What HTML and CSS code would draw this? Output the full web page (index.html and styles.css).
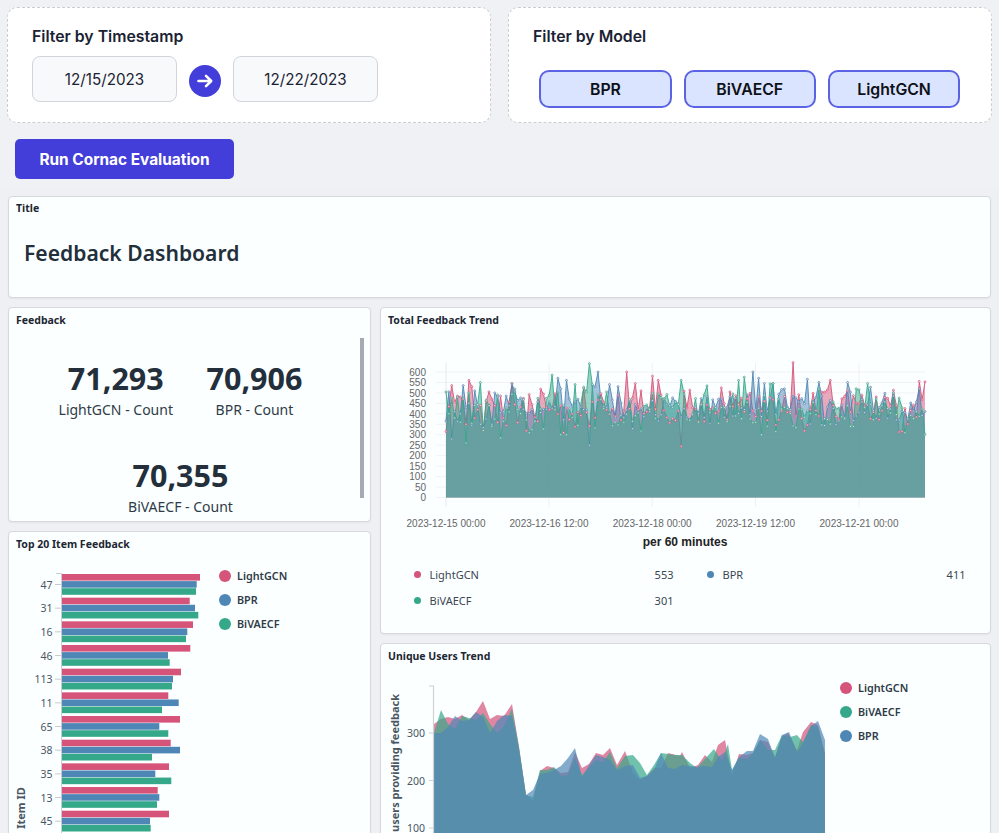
FILE: index.html
```html
<!DOCTYPE html>
<html lang="en">
<head>
<meta charset="utf-8">
<title>Feedback Dashboard</title>
<link rel="stylesheet" href="styles.css">
</head>
<body>
<section class="filters">
  <div class="filter-card">
    <div class="filter-label">Filter by Timestamp</div>
    <div class="date-row">
      <div class="date-box">12/15/2023</div>
      <div class="arrow-circle">
        <svg width="18" height="18" viewBox="0 0 18 18" fill="none" stroke="#fff" stroke-width="2.6" stroke-linecap="round" stroke-linejoin="round"><path d="M2.5 9h12.5M10 3.8 15.2 9 10 14.2"/></svg>
      </div>
      <div class="date-box">12/22/2023</div>
    </div>
  </div>
  <div class="filter-card">
    <div class="filter-label">Filter by Model</div>
    <div class="model-row">
      <div class="model-btn">BPR</div>
      <div class="model-btn">BiVAECF</div>
      <div class="model-btn">LightGCN</div>
    </div>
  </div>
</section>
<div class="run-row"><div class="run-btn">Run Cornac Evaluation</div></div>
<main class="dash">
  <section class="card title-card">
    <h2 class="card-title">Title</h2>
    <h1 class="dash-title">Feedback Dashboard</h1>
  </section>
  <div class="columns">
    <div class="col col-left">
      <section class="card feedback-card">
        <h2 class="card-title">Feedback</h2>
        <div class="stats">
          <div class="stat"><div class="stat-num">71,293</div><div class="stat-label">LightGCN - Count</div></div>
          <div class="stat"><div class="stat-num">70,906</div><div class="stat-label">BPR - Count</div></div>
          <div class="stat"><div class="stat-num">70,355</div><div class="stat-label">BiVAECF - Count</div></div>
        </div>
        <div class="scroll-thumb"></div>
      </section>
      <section class="card top-card">
        <h2 class="card-title">Top 20 Item Feedback</h2>
        <svg id="top-chart" class="chart" width="361" height="300" viewBox="9 557 361 300"></svg>
      </section>
    </div>
    <div class="col col-right">
      <section class="card trend-card">
        <h2 class="card-title">Total Feedback Trend</h2>
        <svg id="trend-chart" class="chart" width="609" height="222" viewBox="381 333 609 222"></svg>
        <div class="trend-legend">
          <div class="leg-item"><i class="dot pink"></i><span class="leg-name">LightGCN</span><span class="leg-val">553</span></div>
          <div class="leg-item"><i class="dot blue"></i><span class="leg-name">BPR</span><span class="leg-val">411</span></div>
          <div class="leg-item"><i class="dot green"></i><span class="leg-name">BiVAECF</span><span class="leg-val">301</span></div>
        </div>
      </section>
      <section class="card users-card">
        <h2 class="card-title">Unique Users Trend</h2>
        <svg id="users-chart" class="chart" width="609" height="200" viewBox="381 669 609 200"></svg>
      </section>
    </div>
  </div>
</main>
<script src="charts.js"></script>
</body>
</html>
```
FILE: styles.css
```css
html, body { margin: 0; height: 833px; overflow: hidden; }
body { background: #f0f1f4; font-family: "Noto Sans", sans-serif; color: #232f3b; }
* { box-sizing: border-box; }

.filters { display: grid; grid-template-columns: 484px 484px; gap: 17px; padding: 7px 7px 0 7px; }
.filter-card { height: 116px; background: #fff; border: 1px dashed #c9ccd1; border-radius: 10px; padding: 18px 24px; font-family: Inter, sans-serif; }
.filter-label { font-size: 15.8px; font-weight: 600; line-height: 22px; color: #1a2233; }
.date-row { display: flex; align-items: center; gap: 12px; margin-top: 8px; }
.date-box { width: 145px; height: 46px; display: flex; align-items: center; justify-content: center; background: #f8f9fb; border: 1px solid #d1d5db; border-radius: 8px; font-size: 15.2px; color: #1a2233; }
.arrow-circle { width: 32px; height: 32px; margin-top: 4px; border-radius: 50%; background: #433dd9; display: flex; align-items: center; justify-content: center; }
.model-row { display: flex; gap: 12px; margin: 22px 0 0 6.3px; }
.model-btn { width: 132.3px; height: 38px; display: flex; align-items: center; justify-content: center; background: #dbe4fe; border: 2px solid #5b63e4; border-radius: 10px; font-size: 15.8px; font-weight: 600; color: #0d1117; }

.run-row { padding: 16px 15px 7px; height: 64px; }
.run-btn { width: 219px; height: 40px; display: flex; align-items: center; justify-content: center; background: #433dd9; border-radius: 5px; color: #fff; font-family: Inter, sans-serif; font-size: 15.4px; font-weight: 700; }

.dash { background: #eef0f3; padding: 9px 8px 0; display: flex; flex-direction: column; gap: 9px; }
.columns { display: grid; grid-template-columns: 363px 611px; gap: 9px; }
.col { display: flex; flex-direction: column; gap: 9px; }

.card { position: relative; background: #fbffff; border: 1px solid #d5d8dc; border-radius: 4px; box-shadow: 0 1px 2px rgba(0,0,0,.05); overflow: hidden; }
.card-title { margin: 0; padding: 5px 7px 0; font-size: 10.5px; line-height: 14px; font-weight: 700; color: #1d2733; }
.title-card { height: 102px; }
.title-card .card-title { padding-top: 4px; }
.dash-title { margin: 23px 0 0 15px; font-size: 21.1px; line-height: 30px; font-weight: 600; color: #232f3b; }

.feedback-card { height: 215px; }
.stats { display: flex; flex-wrap: wrap; justify-content: center; padding: 29px 18px 0 0; }
.stat { padding: 0 16.75px; height: 97px; text-align: center; }
.stat-num { font-size: 30.5px; line-height: 44px; font-weight: 700; color: #232f3b; }
.stat-label { font-size: 14px; line-height: 20px; color: #2f3b47; }
.scroll-thumb { position: absolute; left: 351px; top: 30px; width: 4px; height: 160px; background: #a5abb3; }

.top-card { height: 500px; }
.trend-card { height: 327px; }
.users-card { height: 400px; }
.chart { display: block; margin-top: 6px; }
.chart text { font-family: "Noto Sans", sans-serif; }
.chart .ltick { font-family: "Liberation Sans", sans-serif; font-size: 10px; fill: #666; }
.chart .laxis { font-family: "Liberation Sans", sans-serif; font-size: 12px; font-weight: 700; fill: #222; }
.chart .tick { font-size: 10.5px; fill: #4a5663; }
.chart .axis-title { font-size: 11px; font-weight: 700; fill: #4a5663; }
.chart .leg { font-size: 10.8px; font-weight: 600; fill: #2f3b47; }

.trend-legend { display: grid; grid-template-columns: 260px 259px; row-gap: 7px; column-gap: 33px; padding: 9.5px 0 0 32.5px; }
.leg-item { display: flex; align-items: center; font-size: 11px; line-height: 19px; color: #3b4653; }
.dot { width: 7px; height: 7px; border-radius: 50%; margin-right: 9px; }
.leg-name { flex: 1; }
.pink { background: #d6537a; }
.blue { background: #4e87b6; }
.green { background: #36a88a; }
```
FILE: charts.js
```js
(function () {
  var NS = 'http://www.w3.org/2000/svg';
  var PINK = '#d6537a', BLUE = '#4e87b6', GREEN = '#36a88a';

  function el(parent, name, attrs, text) {
    var n = document.createElementNS(NS, name);
    for (var k in attrs) n.setAttribute(k, attrs[k]);
    if (text !== undefined) n.textContent = text;
    parent.appendChild(n);
    return n;
  }
  function legend(svg, x, y, items) {
    items.forEach(function (it, i) {
      el(svg, 'circle', { cx: x, cy: y + i * 24, r: 6, fill: it[1] });
      el(svg, 'text', { x: x + 12, y: y + i * 24 + 4, 'class': 'leg' }, it[0]);
    });
  }

  /* Top 20 items: bar ends in px */
  var top = document.getElementById('top-chart');
  var items = [
    ['47', 200, 196.7, 196], ['31', 189.7, 195, 198.3], ['16', 193, 187.3, 186],
    ['46', 190.3, 168, 169.7], ['113', 181, 173, 172], ['11', 168.3, 178.7, 162],
    ['65', 180, 159.3, 168.3], ['38', 170.7, 180, 152], ['35', 169, 155.3, 171.3],
    ['13', 157.7, 159.3, 157], ['45', 169, 150, 150.7]
  ];
  el(top, 'line', { x1: 61.5, y1: 573, x2: 61.5, y2: 850, stroke: '#c8cbcf', 'stroke-width': 1 });
  el(top, 'line', { x1: 56, y1: 573.5, x2: 62, y2: 573.5, stroke: '#c8cbcf' });
  items.forEach(function (d, i) {
    var y = 574 + i * 23.67;
    [PINK, BLUE, GREEN].forEach(function (c, j) {
      el(top, 'rect', { x: 62, y: y + j * 7.1, width: d[j + 1] - 62, height: 6.6, fill: c });
    });
    el(top, 'line', { x1: 55, y1: y + 10.5, x2: 62, y2: y + 10.5, stroke: '#c8cbcf' });
    el(top, 'text', { x: 52.5, y: y + 14.5, 'text-anchor': 'end', 'class': 'tick' }, d[0]);
  });
  el(top, 'text', { transform: 'translate(25 808) rotate(-90)', 'text-anchor': 'middle', 'class': 'axis-title' }, 'Item ID');
  legend(top, 225, 576, [['LightGCN', PINK], ['BPR', BLUE], ['BiVAECF', GREEN]]);

  /* Total feedback trend */
  var trend = document.getElementById('trend-chart');
  var x0 = 446, xEnd = 925, y0 = 497.5, k = 0.2092, N = 168;
  var seed = 20231215;
  function rnd() {
    seed = (seed + 0x6D2B79F5) | 0;
    var t = Math.imul(seed ^ (seed >>> 15), 1 | seed);
    t = (t + Math.imul(t ^ (t >>> 7), 61 | t)) ^ t;
    return ((t ^ (t >>> 14)) >>> 0) / 4294967296;
  }
  function series(head, over, last) {
    var a = [];
    for (var i = 0; i < N; i++) {
      var v = 430 + (rnd() + rnd() + rnd() - 1.5) * 105;
      a.push(Math.round(Math.max(300, Math.min(545, v))));
    }
    head.forEach(function (v, i) { a[i] = v; });
    for (var key in over) a[key] = over[key];
    a[N - 1] = last;
    return a;
  }
  var pink = series([315, 435, 535, 455, 485, 480, 470, 350, 560, 530, 380, 420, 440, 320, 460, 505, 470, 440, 360, 485, 380],
    { 23: 545, 63: 600, 68: 510, 72: 580, 74: 560, 82: 245, 121: 645, 134: 560, 165: 555 }, 553);
  var blue = series([365, 505, 280, 410, 365, 400, 535, 430, 450, 345, 510, 440, 350, 335, 375, 440, 350, 500, 480, 405, 410],
    { 39: 570, 40: 520, 42: 560, 50: 250, 52: 530, 53: 600, 57: 540, 60: 530, 107: 600, 109: 570, 126: 565, 130: 550, 140: 550 }, 411);
  var green = series([505, 400, 475, 380, 480, 360, 475, 260, 500, 355, 440, 445, 550, 320, 465, 440, 340, 375, 490, 285, 365],
    { 36: 490, 37: 585, 45: 540, 50: 640, 51: 540, 82: 560, 102: 560, 104: 575 }, 301);

  [100, 200, 300, 400, 500, 600, 50, 150, 250, 350, 450, 550, 0].forEach(function (v) {
    var y = y0 - v * k;
    el(trend, 'line', { x1: 436, y1: y, x2: 925, y2: y, stroke: '#f1f2f3', 'stroke-width': 1 });
  });
  [446, 549, 652.2, 755.5, 859].forEach(function (x, i) {
    el(trend, 'line', { x1: x, y1: 363, x2: x, y2: 507, stroke: i ? '#eff0f1' : '#e6e7e9', 'stroke-width': 1 });
    el(trend, 'text', { x: x, y: 527, 'text-anchor': 'middle', 'class': 'ltick' },
      ['2023-12-15 00:00', '2023-12-16 12:00', '2023-12-18 00:00', '2023-12-19 12:00', '2023-12-21 00:00'][i]);
  });
  for (var v = 0; v <= 600; v += 50) {
    el(trend, 'text', { x: 426, y: y0 - v * k + 3.7, 'text-anchor': 'end', 'class': 'ltick' }, v);
  }
  [[pink, PINK], [blue, BLUE], [green, GREEN]].forEach(function (s) {
    var pts = s[0].map(function (v, i) {
      return (x0 + i * (xEnd - x0) / (N - 1)).toFixed(1) + ',' + (y0 - v * k).toFixed(1);
    });
    el(trend, 'polygon', { points: x0 + ',' + y0 + ' ' + pts.join(' ') + ' ' + xEnd + ',' + y0, fill: s[1], 'fill-opacity': 0.5 });
    el(trend, 'polyline', { points: pts.join(' '), fill: 'none', stroke: s[1], 'stroke-width': 0.9 });
  });
  [[pink, PINK], [blue, BLUE], [green, GREEN]].forEach(function (s) {
    s[0].forEach(function (v, i) {
      el(trend, 'circle', { cx: x0 + i * (xEnd - x0) / (N - 1), cy: y0 - v * k, r: 1, fill: '#f7dde5', stroke: s[1], 'stroke-width': 0.7 });
    });
  });
  el(trend, 'text', { x: 685, y: 546, 'text-anchor': 'middle', 'class': 'laxis' }, 'per 60 minutes');

  /* Unique users trend: points read in px */
  var users = document.getElementById('users-chart');
  var P = [[434,724],[441,719],[448,717],[455,719],[462,715],[469,720],[476,712],[483,701],[490,719],[497,715],[504,716],[512,704],[519,747],[526,795],[533,801],[540,771],[547,766],[554,768],[561,773],[568,772],[575,752],[582,768],[589,764],[596,753],[603,755],[610,748],[617,765],[625,751],[633,773],[640,780],[647,776],[654,768],[661,768],[668,753],[680,756],[682,752],[690,768],[698,765],[705,755],[712,762],[718,745],[725,740],[732,775],[739,754],[747,755],[753,753],[760,740],[768,742],[775,757],[782,737],[788,733],[797,750],[803,732],[811,722],[818,725],[825,753]];
  var G = [[434,733],[441,710],[448,724],[455,729],[462,716],[469,718],[476,720],[483,713],[490,724],[497,733],[504,726],[512,709],[519,747],[526,795],[533,797],[540,770],[547,770],[554,767],[561,776],[568,775],[575,758],[582,775],[589,768],[596,760],[603,762],[610,752],[617,768],[625,756],[633,755],[640,763],[647,775],[654,765],[661,753],[668,754],[675,755],[682,755],[690,763],[697,768],[704,760],[714,749],[722,761],[728,744],[732,770],[739,758],[747,759],[753,753],[760,740],[768,750],[775,750],[782,735],[790,737],[797,735],[803,742],[811,725],[818,727],[825,755]];
  var B = [[434,733],[441,733],[448,727],[455,716],[462,721],[469,720],[476,712],[483,717],[490,733],[497,721],[504,715],[512,716],[519,749],[526,795],[533,790],[540,774],[547,773],[554,770],[561,766],[568,758],[575,748],[582,777],[589,765],[596,755],[603,757],[610,760],[617,770],[625,766],[633,765],[640,778],[647,776],[654,770],[661,753],[668,768],[675,769],[682,765],[690,766],[697,767],[704,766],[712,767],[718,757],[725,752],[732,770],[739,757],[747,751],[753,751],[760,734],[768,739],[775,758],[782,735],[789,732],[797,752],[803,743],[811,726],[818,721],[825,740]];
  [[P, PINK], [G, GREEN], [B, BLUE]].forEach(function (s) {
    var pts = s[0].map(function (p) { return p.join(','); }).join(' ');
    el(users, 'polygon', { points: '434,876 ' + pts + ' 825,876', fill: s[1], 'fill-opacity': 0.7 });
  });
  el(users, 'line', { x1: 433.5, y1: 686, x2: 433.5, y2: 876, stroke: '#cfd1d4', 'stroke-width': 1.2 });
  el(users, 'line', { x1: 429, y1: 686, x2: 434, y2: 686, stroke: '#cfd1d4', 'stroke-width': 1.2 });
  [[733, '300'], [780.5, '200'], [828, '100']].forEach(function (t) {
    el(users, 'line', { x1: 429, y1: t[0], x2: 434, y2: t[0], stroke: '#cfd1d4' });
    el(users, 'text', { x: 425, y: t[0] + 4, 'text-anchor': 'end', 'class': 'tick' }, t[1]);
  });
  el(users, 'text', { transform: 'translate(399 694) rotate(-90)', 'text-anchor': 'end', 'class': 'axis-title' }, 'Unique users providing feedback');
  legend(users, 846, 688, [['LightGCN', PINK], ['BiVAECF', GREEN], ['BPR', BLUE]]);
})();
```
